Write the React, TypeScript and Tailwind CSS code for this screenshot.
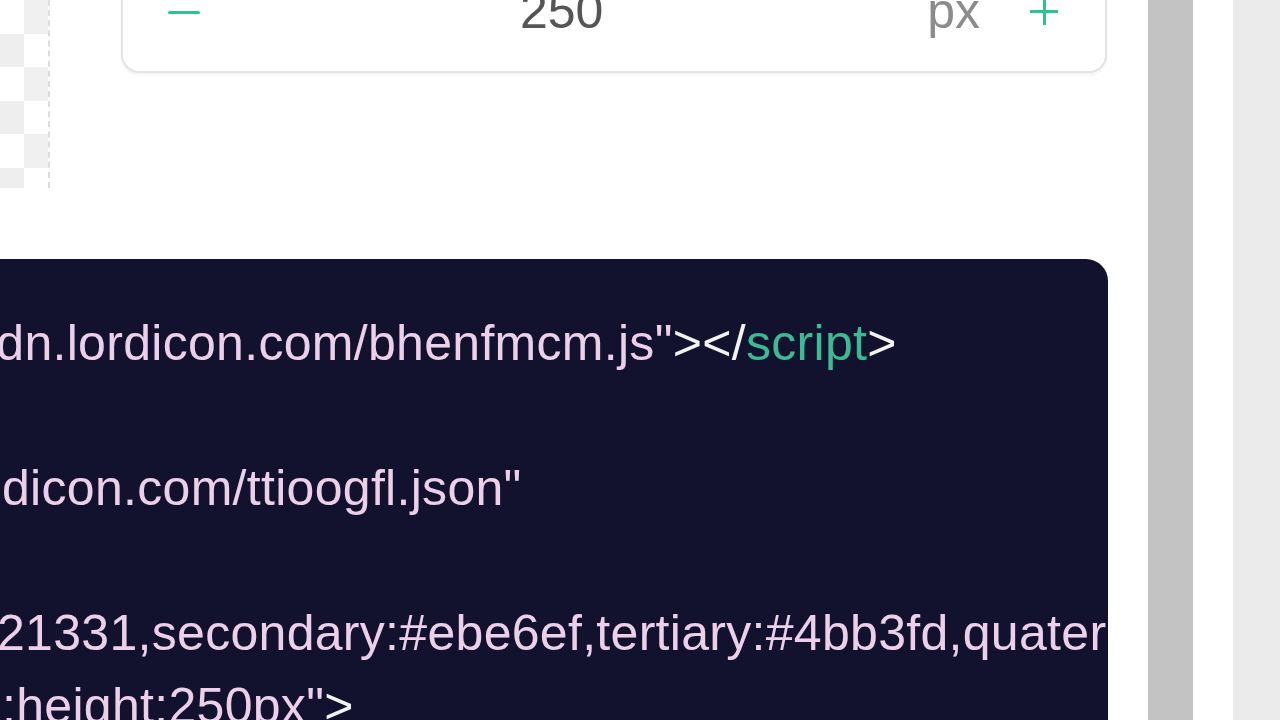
import React from "react";

const pink = "text-[#ecd0ea]";

function Checker() {
  const rows = [0, 1, 2, 3, 4, 5];
  return (
    <div className="flex h-[188px] w-[50px] shrink-0 overflow-hidden border-r-2 border-dashed border-[#dcdcdc]">
      <div className="flex flex-col">
        {rows.map((r) => (
          <div
            key={r}
            className={
              r % 2 === 1
                ? "h-[33.5px] w-[24px] shrink-0 bg-[#eeeeee]"
                : "h-[33.5px] w-[24px] shrink-0 bg-white"
            }
          />
        ))}
      </div>
      <div className="flex flex-col">
        {rows.map((r) => (
          <div
            key={r}
            className={
              r % 2 === 0
                ? "h-[33.5px] w-[24px] shrink-0 bg-[#f0f0f0]"
                : "h-[33.5px] w-[24px] shrink-0 bg-white"
            }
          />
        ))}
      </div>
    </div>
  );
}

function SizeInput() {
  return (
    <div className="-mt-[79px] ml-[71px] w-[986px] shrink-0 rounded-[18px] border-2 border-[#e4e4e4] bg-white pt-[62px] pb-[34px] pl-[45px] pr-[47px] shadow-[0_2px_3px_rgba(0,0,0,0.05)]">
      <div className="flex h-[52px] items-center">
        <div className="flex h-[52px] w-[34px] items-center pt-[3px]">
          <div className="h-[3px] w-[32px] rounded-full bg-[#2bc48e]" />
        </div>
        <div className="flex-1 text-center text-[50px] leading-[52px] text-[#555555]">
          <span className="mr-[6px]">250</span>
        </div>
        <div className="text-[50px] leading-[52px] text-[#8c8c8c]">px</div>
        <div className="relative ml-[50px] h-[28px] w-[28px]">
          <div className="absolute left-0 top-[12.5px] h-[3px] w-[28px] bg-[#2bc48e]" />
          <div className="absolute left-[12.5px] top-0 h-[28px] w-[3px] bg-[#2bc48e]" />
        </div>
      </div>
    </div>
  );
}

function CodeBlock() {
  return (
    <div className="w-[1108px] flex-1 overflow-hidden rounded-tr-[22px] bg-[#13122e] pt-[48px] text-[50px] leading-[72.5px] tracking-[0.3px] whitespace-nowrap">
      <div className="-ml-[29px]">
        <span className={pink}>cdn.lordicon.com/bhenfmcm.js"</span>
        <span className="text-[#f2f2f2]">&gt;&lt;/</span>
        <span className="text-[#3cba93]">script</span>
        <span className="text-[#f2f2f2]">&gt;</span>
      </div>
      <div>&nbsp;</div>
      <div className="ml-[2px]">
        <span className={pink}>dicon.com/ttioogfl.json"</span>
      </div>
      <div>&nbsp;</div>
      <div className="-ml-[3px]">
        <span className={pink}>21331,secondary:#ebe6ef,tertiary:#4bb3fd,quaternary:#f24c00</span>
      </div>
      <div className="ml-[2px]">
        <span className={pink}>;height:250px"</span>
        <span className="text-[#f2f2f2]">&gt;</span>
      </div>
    </div>
  );
}

export default function App() {
  return (
    <div
      className="flex h-[720px] w-[1280px] overflow-hidden bg-white"
      style={{ fontFamily: '"Liberation Sans", Arial, sans-serif' }}
    >
      <div className="flex w-[1148px] shrink-0 flex-col">
        <div className="flex h-[259px] shrink-0 items-start">
          <Checker />
          <SizeInput />
        </div>
        <CodeBlock />
      </div>
      <div className="w-[45px] shrink-0 bg-[#c3c3c3]" />
      <div className="w-[40px] shrink-0 bg-white" />
      <div className="flex-1 bg-[#ebebeb]" />
    </div>
  );
}
